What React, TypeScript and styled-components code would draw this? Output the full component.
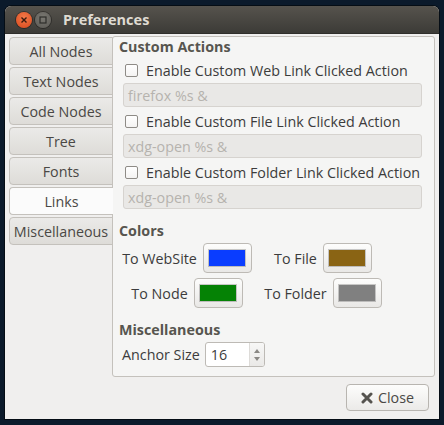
import React from 'react';
import styled, { createGlobalStyle } from 'styled-components';

const GlobalStyle = createGlobalStyle`
  html, body {
    margin: 0;
    padding: 0;
    background: #0b1a2b;
  }
  body {
    font-family: "Open Sans", "DejaVu Sans", sans-serif;
    font-size: 14.3px;
    color: #3c3c3c;
  }
  * {
    box-sizing: border-box;
  }
`;

const Screen = styled.div`
  width: 444px;
  height: 425px;
  padding: 6px 5px 6px 5px;
`;

const Window = styled.div`
  width: 434px;
  height: 413px;
  display: flex;
  flex-direction: column;
  background: #f0efee;
  border-radius: 6px 6px 0 0;
  box-shadow: 0 0 0 1px rgba(0, 0, 0, 0.5);
  overflow: hidden;
`;

const TitleBar = styled.div`
  height: 28px;
  flex: none;
  display: flex;
  align-items: center;
  padding-left: 11px;
  background: linear-gradient(#56534d, #3c3b37);
  border-bottom: 1px solid #2f2e2b;
`;

const WinButton = styled.div<{ $close?: boolean }>`
  width: 16px;
  height: 16px;
  border-radius: 50%;
  margin-right: 3px;
  display: flex;
  align-items: center;
  justify-content: center;
  background: ${(p) =>
    p.$close
      ? 'radial-gradient(circle at 50% 35%, #f47a4a, #d8471a)'
      : 'radial-gradient(circle at 50% 35%, #7a7872, #5b5954)'};
  box-shadow: 0 0 0 1px rgba(0, 0, 0, 0.35);
`;

const Title = styled.div`
  margin-left: 9px;
  color: #dfdbd2;
  font-weight: bold;
  font-size: 14.5px;
`;

const Body = styled.div`
  flex: 1;
  display: flex;
  flex-direction: column;
  padding: 2px 4px 9px 4px;
`;

const Notebook = styled.div`
  display: flex;
  height: 341px;
`;

const TabList = styled.div`
  width: 104px;
  flex: none;
  display: flex;
  flex-direction: column;
  gap: 2px;
  padding-top: 1px;
  margin-right: -1px;
  position: relative;
  z-index: 1;
`;

const Tab = styled.div<{ $active?: boolean }>`
  height: 28px;
  display: flex;
  align-items: center;
  justify-content: center;
  border: 1px solid #c4c1bc;
  border-right: ${(p) => (p.$active ? 'none' : '1px solid #c4c1bc')};
  border-radius: 4px 0 0 4px;
  background: ${(p) =>
    p.$active ? '#fbfbfb' : 'linear-gradient(#ebeae8, #dedcd8)'};
  color: #4a4845;
`;

const Page = styled.div`
  flex: 1;
  border: 1px solid #c4c1bc;
  border-radius: 3px;
  background: #f5f5f4;
  padding: 0 10px 0 6px;
  display: flex;
  flex-direction: column;
`;

const SectionTitle = styled.div<{ $gap?: number }>`
  height: 20px;
  line-height: 20px;
  margin-top: ${(p) => p.$gap ?? 0}px;
  font-weight: bold;
  color: #57554f;
`;

const CheckRow = styled.label`
  height: 26px;
  display: flex;
  align-items: center;
  gap: 8px;
  padding-left: 6px;
`;

const CheckBox = styled.span`
  width: 13px;
  height: 13px;
  border: 1px solid #8e8b86;
  border-radius: 2px;
  background: linear-gradient(#ffffff, #f4f3f2);
`;

const Entry = styled.div`
  height: 24px;
  margin: 0 0 1px 4px;
  width: 299px;
  border: 1px solid #d6d3cf;
  border-radius: 3px;
  background: #e9e8e6;
  color: #b6b3ae;
  padding-left: 4px;
  display: flex;
  align-items: center;
`;

const ColorGrid = styled.div`
  display: grid;
  grid-template-columns: 136px 136px;
  row-gap: 5px;
  margin-top: 2px;
`;

const ColorPair = styled.div`
  display: flex;
  align-items: center;
  justify-content: center;
  gap: 6px;
  height: 30px;
`;

const ColorButton = styled.div`
  width: 49px;
  height: 30px;
  border: 1px solid #bdbab5;
  border-radius: 4px;
  background: linear-gradient(#fdfdfc, #e9e8e6);
  display: flex;
  align-items: center;
  justify-content: center;
`;

const Swatch = styled.div<{ $color: string }>`
  width: 36px;
  height: 16px;
  background: ${(p) => p.$color};
  box-shadow: 0 0 0 1px rgba(0, 0, 0, 0.2);
`;

const SpinRow = styled.div`
  display: flex;
  align-items: center;
  gap: 5px;
  margin-top: 2px;
  padding-left: 3px;
`;

const Spin = styled.div`
  width: 60px;
  height: 25px;
  display: flex;
  border: 1px solid #bdbab5;
  border-radius: 3px;
  background: #ffffff;
  overflow: hidden;
`;

const SpinValue = styled.div`
  flex: 1;
  display: flex;
  align-items: center;
  padding-left: 5px;
  color: #3c3c3c;
`;

const SpinArrows = styled.div`
  width: 15px;
  border-left: 1px solid #dddbd8;
  background: linear-gradient(#f7f7f6, #eae9e7);
  display: flex;
  flex-direction: column;
  align-items: center;
  justify-content: center;
  gap: 4px;
`;

const Footer = styled.div`
  display: flex;
  justify-content: flex-end;
  margin-top: 7px;
  padding-right: 6px;
`;

const Button = styled.div`
  width: 83px;
  height: 27px;
  border: 1px solid #b8b5b0;
  border-radius: 4px;
  background: linear-gradient(#fdfdfc, #ebeae8);
  display: flex;
  align-items: center;
  justify-content: center;
  gap: 5px;
  color: #4a4845;
`;

const tabs = ['All Nodes', 'Text Nodes', 'Code Nodes', 'Tree', 'Fonts', 'Links', 'Miscellaneous'];

const actions = [
  { label: 'Enable Custom Web Link Clicked Action', cmd: 'firefox %s &' },
  { label: 'Enable Custom File Link Clicked Action', cmd: 'xdg-open %s &' },
  { label: 'Enable Custom Folder Link Clicked Action', cmd: 'xdg-open %s &' },
];

const colors = [
  { label: 'To WebSite', color: '#0a3dff' },
  { label: 'To File', color: '#8a6414' },
  { label: 'To Node', color: '#058205' },
  { label: 'To Folder', color: '#808080' },
];

const App: React.FC = () => (
  <>
    <GlobalStyle />
    <Screen>
      <Window>
        <TitleBar>
          <WinButton $close>
            <svg width="8" height="8" viewBox="0 0 8 8">
              <path d="M1.5 1.5l5 5M6.5 1.5l-5 5" stroke="#3a1a0e" strokeWidth="1.4" />
            </svg>
          </WinButton>
          <WinButton>
            <svg width="8" height="8" viewBox="0 0 8 8">
              <rect x="1" y="1" width="6" height="6" fill="none" stroke="#2e2d2a" strokeWidth="1.2" />
            </svg>
          </WinButton>
          <Title>Preferences</Title>
        </TitleBar>
        <Body>
          <Notebook>
            <TabList>
              {tabs.map((t) => (
                <Tab key={t} $active={t === 'Links'}>
                  {t}
                </Tab>
              ))}
            </TabList>
            <Page>
              <SectionTitle>Custom Actions</SectionTitle>
              {actions.map((a) => (
                <React.Fragment key={a.label}>
                  <CheckRow>
                    <CheckBox />
                    {a.label}
                  </CheckRow>
                  <Entry>{a.cmd}</Entry>
                </React.Fragment>
              ))}
              <SectionTitle $gap={11}>Colors</SectionTitle>
              <ColorGrid>
                {colors.map((c) => (
                  <ColorPair key={c.label}>
                    {c.label}
                    <ColorButton>
                      <Swatch $color={c.color} />
                    </ColorButton>
                  </ColorPair>
                ))}
              </ColorGrid>
              <SectionTitle $gap={12}>Miscellaneous</SectionTitle>
              <SpinRow>
                Anchor Size
                <Spin>
                  <SpinValue>16</SpinValue>
                  <SpinArrows>
                    <svg width="6" height="4" viewBox="0 0 6 4">
                      <path d="M0 4L3 0L6 4Z" fill="#8a8884" />
                    </svg>
                    <svg width="6" height="4" viewBox="0 0 6 4">
                      <path d="M0 0L3 4L6 0Z" fill="#8a8884" />
                    </svg>
                  </SpinArrows>
                </Spin>
              </SpinRow>
            </Page>
          </Notebook>
          <Footer>
            <Button>
              <svg width="12" height="12" viewBox="0 0 12 12">
                <path d="M2 2l8 8M10 2l-8 8" stroke="#55534f" strokeWidth="3" strokeLinecap="round" />
              </svg>
              Close
            </Button>
          </Footer>
        </Body>
      </Window>
    </Screen>
  </>
);

export default App;
